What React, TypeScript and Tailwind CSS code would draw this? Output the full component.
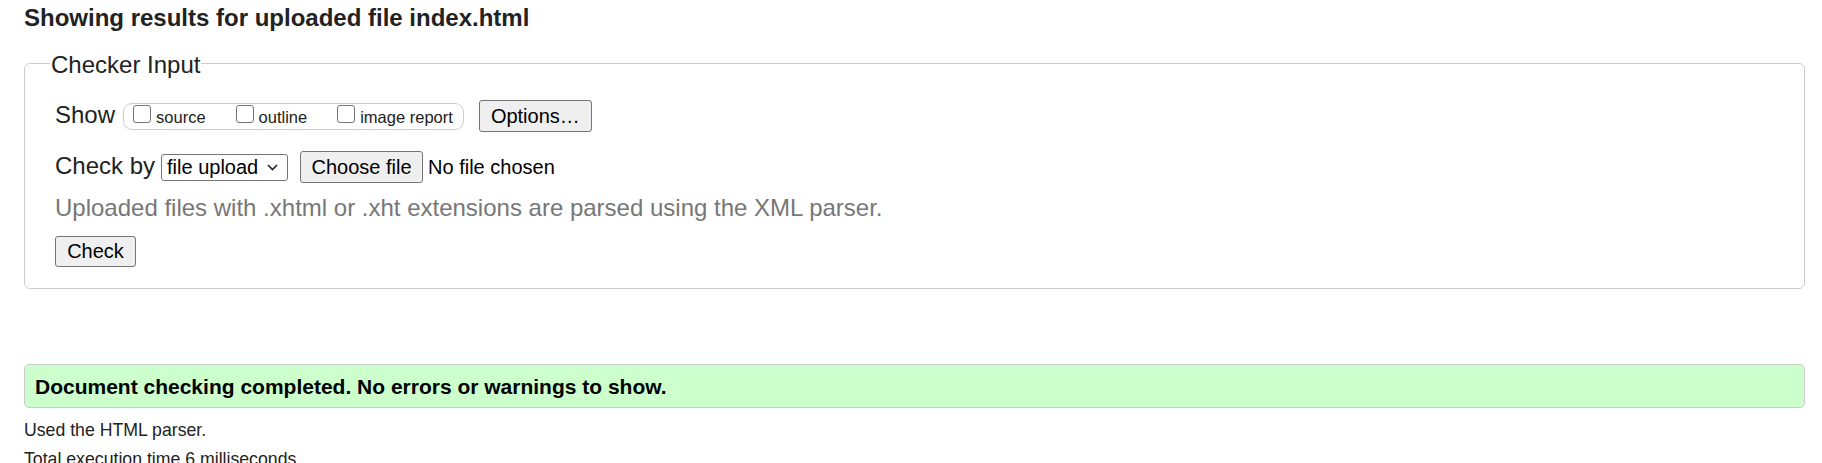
import React from "react";

const font = { fontFamily: '"Liberation Sans", Arial, sans-serif' };

function Box({ label }: { label: string }) {
  return (
    <label className="flex items-start gap-[5px]">
      <input
        type="checkbox"
        className="appearance-none w-[18px] h-[18px] mt-[1px] border border-[#767676] rounded-[3px] bg-white"
      />
      <span className="text-[16.5px] leading-[25px] pt-[1px]">{label}</span>
    </label>
  );
}

function Btn({ children, w }: { children: React.ReactNode; w: string }) {
  return (
    <button
      className={`${w} h-[32px] bg-[#efefef] border border-[#767676] rounded-[3px] text-[20px] leading-[23px] text-black`}
    >
      {children}
    </button>
  );
}

export default function App() {
  return (
    <div className="bg-white text-[#222] pl-6 pr-[17px] min-h-screen" style={font}>
      <h2 className="text-[24px] font-bold leading-[28px] pt-[4px]">
        Showing results for uploaded file index.html
      </h2>

      <fieldset className="mt-[16px] border border-[#cccccc] rounded-[6px] pl-[25px] pt-[21px] pb-[21px]">
        <legend className="text-[24px] leading-[28px] pt-[3px] px-[1px]">Checker Input</legend>

        <div className="flex flex-col pl-[5px]">
          {/* show options */}
          <div className="flex items-center h-[32px]">
            <span className="text-[24px] leading-[28px] pb-[3px]">Show</span>
            <div className="ml-[8px] flex items-start h-[27px] border border-[#cccccc] rounded-[9px] pl-[9px] pr-[10px] gap-[30px]">
              <Box label="source" />
              <Box label="outline" />
              <Box label="image report" />
            </div>
            <div className="ml-[15px]">
              <Btn w="w-[113px]">Options…</Btn>
            </div>
          </div>

          {/* check by */}
          <div className="flex items-center h-[32px] mt-[19px]">
            <span className="text-[24px] leading-[28px] pb-[3px]">Check by</span>
            <div className="ml-[6px] flex items-center justify-between w-[127px] h-[27px] border border-[#767676] rounded-[3px] pl-[5px] pr-[9px] text-[20px] text-black">
              <span className="leading-[23px]">file upload</span>
              <svg width="11" height="7" viewBox="0 0 11 7" fill="none">
                <path d="M1 1l4.5 4.5L10 1" stroke="#222" strokeWidth="1.6" />
              </svg>
            </div>
            <div className="ml-[12px]">
              <Btn w="w-[123px]">Choose file</Btn>
            </div>
            <span className="ml-[5px] text-[20px] leading-[23px] text-black">No file chosen</span>
          </div>

          <p className="mt-[11px] text-[24px] leading-[28px] text-[#777]">
            Uploaded files with .xhtml or .xht extensions are parsed using the XML parser.
          </p>

          <div className="mt-[14px]">
            <button className="w-[81px] h-[31px] bg-[#efefef] border border-[#767676] rounded-[3px] text-[20px] leading-[23px] text-black">
              Check
            </button>
          </div>
        </div>
      </fieldset>

      <div className="mt-[75px] h-[44px] flex items-center bg-[#ccffcc] border border-[#cccccc] rounded-[5px] pl-[10px]">
        <p className="text-[21px] font-bold text-black leading-[23px]">
          Document checking completed. No errors or warnings to show.
        </p>
      </div>

      <p className="mt-[12px] text-[17.7px] leading-[20px]">Used the HTML parser.</p>
      <p className="mt-[8.5px] text-[17.7px] leading-[20px]">Total execution time 6 milliseconds.</p>
    </div>
  );
}
